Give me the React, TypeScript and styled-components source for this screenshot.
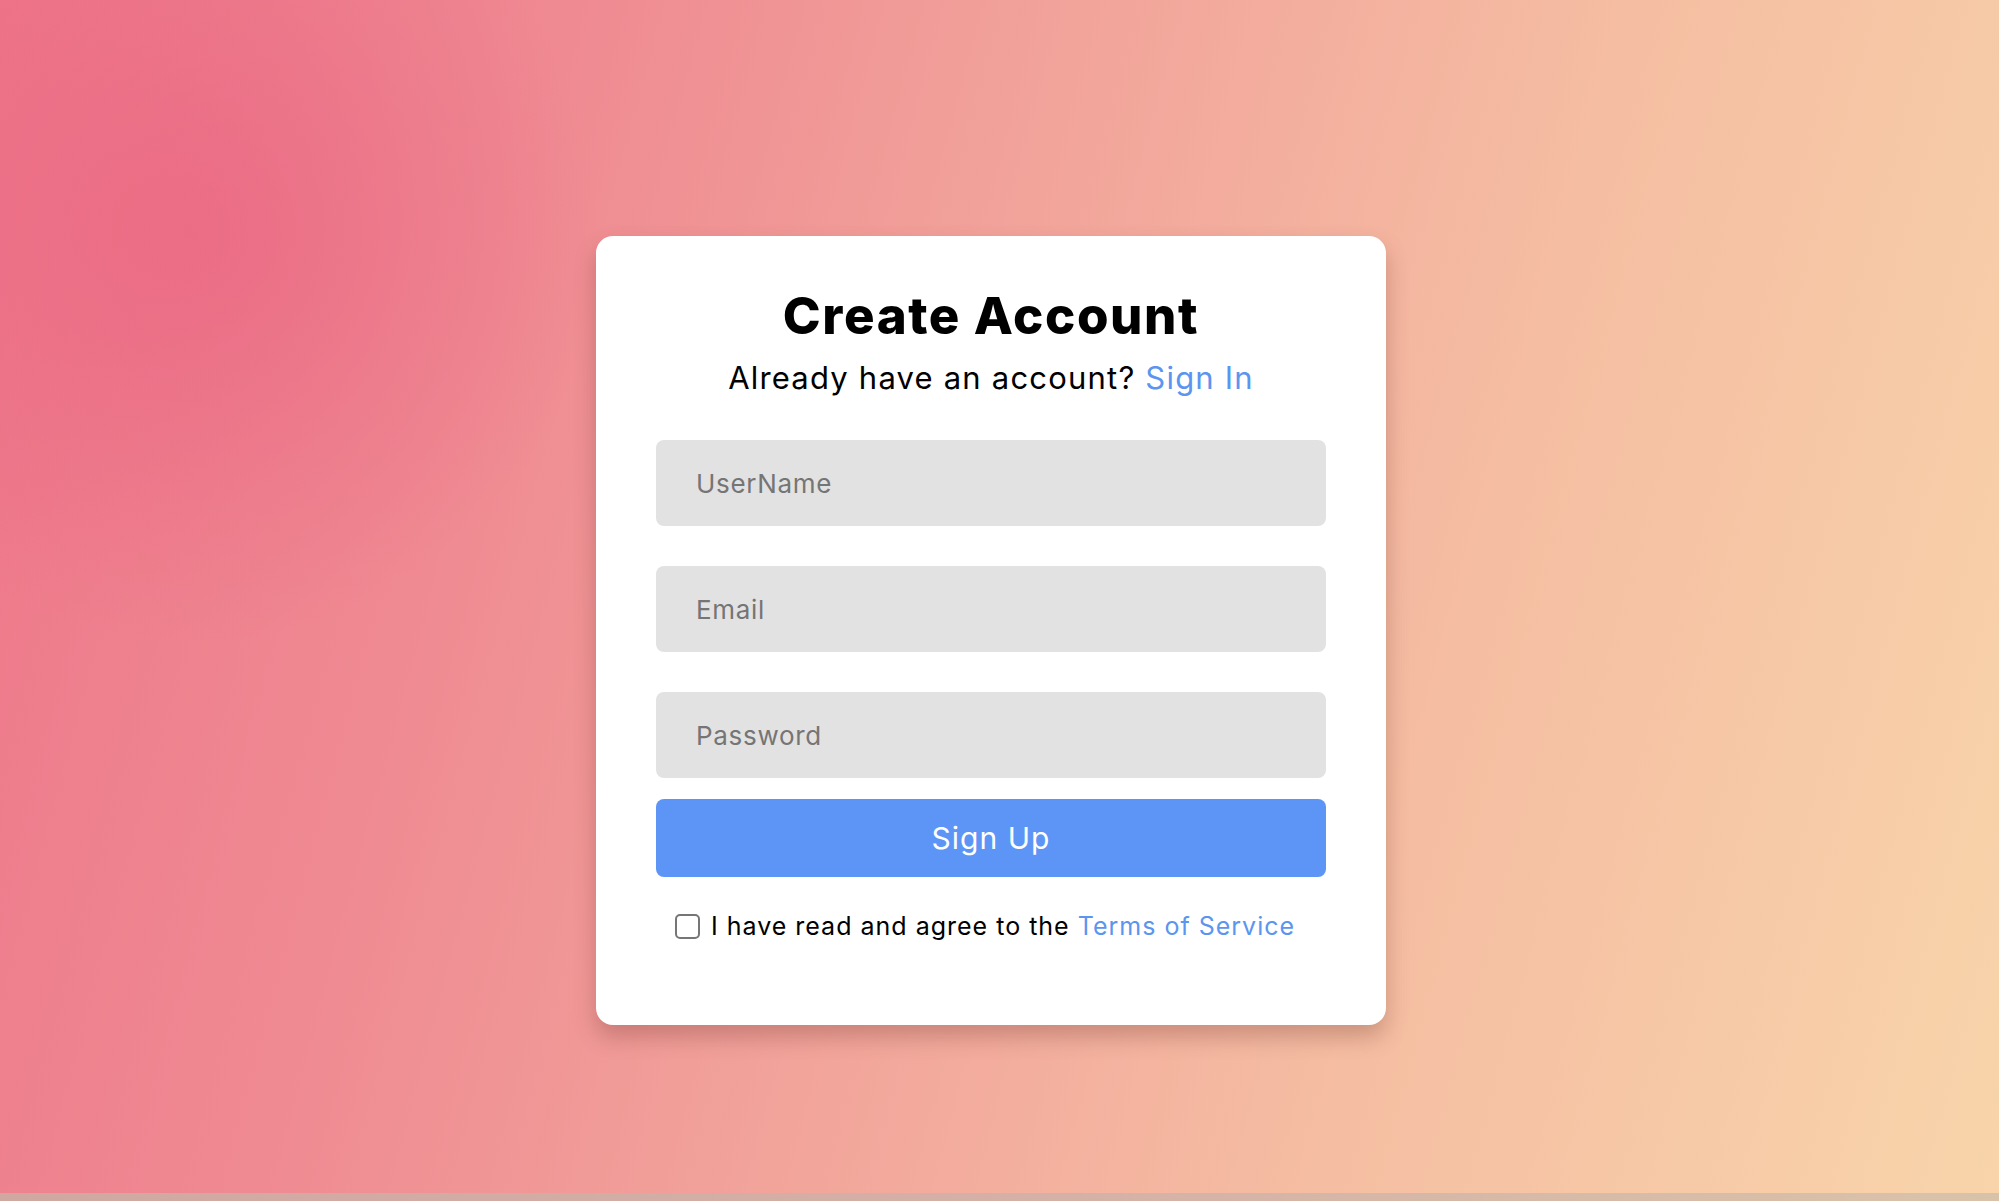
import React from "react";
import styled, { createGlobalStyle } from "styled-components";

const GlobalStyle = createGlobalStyle`
  html, body {
    margin: 0;
    padding: 0;
  }
  html {
    background: linear-gradient(90deg, #cfa8a2 0%, #d4b0a6 50%, #d9c2aa 100%);
  }
  body {
    font-family: Inter, "Noto Sans", "Liberation Sans", sans-serif;
  }
  * { box-sizing: border-box; }
`;

const Page = styled.main`
  height: 1193px;
  display: flex;
  justify-content: center;
  align-items: flex-start;
  padding: 236px 17px 0 0;
  background:
    radial-gradient(circle at 9.5% 19.5%, rgba(233, 100, 130, 0.7) 0%, rgba(233, 100, 130, 0) 20%),
    linear-gradient(105deg, #ee7689 0%, #ef8a92 25%, #f2a59b 48%, #f5bda2 70%, #f8d4aa 100%);
`;

const Card = styled.section`
  width: 790px;
  background: #ffffff;
  border-radius: 17px;
  padding: 50px 60px 86px;
  box-shadow: 0 12px 22px rgba(110, 50, 40, 0.3);
  display: flex;
  flex-direction: column;
  align-items: stretch;
`;

const Title = styled.h1`
  margin: 0;
  font-size: 51px;
  line-height: 60px;
  font-weight: 800;
  color: #000;
  text-align: center;
  letter-spacing: 1.6px;
`;

const Subtitle = styled.p`
  margin: 12px 0 0;
  font-size: 31px;
  line-height: 40px;
  font-weight: 400;
  color: #000;
  text-align: center;
  letter-spacing: 1.2px;
`;

const Link = styled.a`
  color: #5c95ef;
  text-decoration: none;
  cursor: pointer;
`;

const Form = styled.form`
  margin-top: 42px;
  display: flex;
  flex-direction: column;
`;

const Field = styled.input`
  height: 86px;
  border: none;
  outline: none;
  border-radius: 8px;
  background: #e2e2e2;
  padding: 0 40px;
  font-family: inherit;
  font-size: 26px;
  letter-spacing: 0.7px;
  color: #333;
  & + & {
    margin-top: 40px;
  }
  &::placeholder {
    color: #757575;
  }
`;

const SubmitButton = styled.button`
  margin-top: 21px;
  height: 78px;
  border: none;
  border-radius: 8px;
  background: #5c95f6;
  color: #ffffff;
  font-family: inherit;
  font-size: 30px;
  font-weight: 400;
  letter-spacing: 1px;
  cursor: pointer;
`;

const AgreeRow = styled.label`
  margin-top: 37px;
  display: flex;
  align-items: center;
  justify-content: center;
  gap: 11px;
  font-size: 25px;
  line-height: 25px;
  letter-spacing: 1px;
  color: #000;
  padding-right: 12px;
`;

const CheckBox = styled.input.attrs({ type: "checkbox" })`
  appearance: none;
  margin: 0;
  width: 25px;
  height: 25px;
  border: 2px solid #767676;
  border-radius: 5px;
  background: #fff;
  flex: none;
`;

export default function App() {
  return (
    <>
      <GlobalStyle />
      <Page>
        <Card>
          <Title>Create Account</Title>
          <Subtitle>
            Already have an account? <Link>Sign In</Link>
          </Subtitle>
          <Form onSubmit={(e) => e.preventDefault()}>
            <Field type="text" placeholder="UserName" />
            <Field type="email" placeholder="Email" />
            <Field type="password" placeholder="Password" />
            <SubmitButton type="submit">Sign Up</SubmitButton>
            <AgreeRow>
              <CheckBox />
              <span>
                I have read and agree to the <Link>Terms of Service</Link>
              </span>
            </AgreeRow>
          </Form>
        </Card>
      </Page>
    </>
  );
}
